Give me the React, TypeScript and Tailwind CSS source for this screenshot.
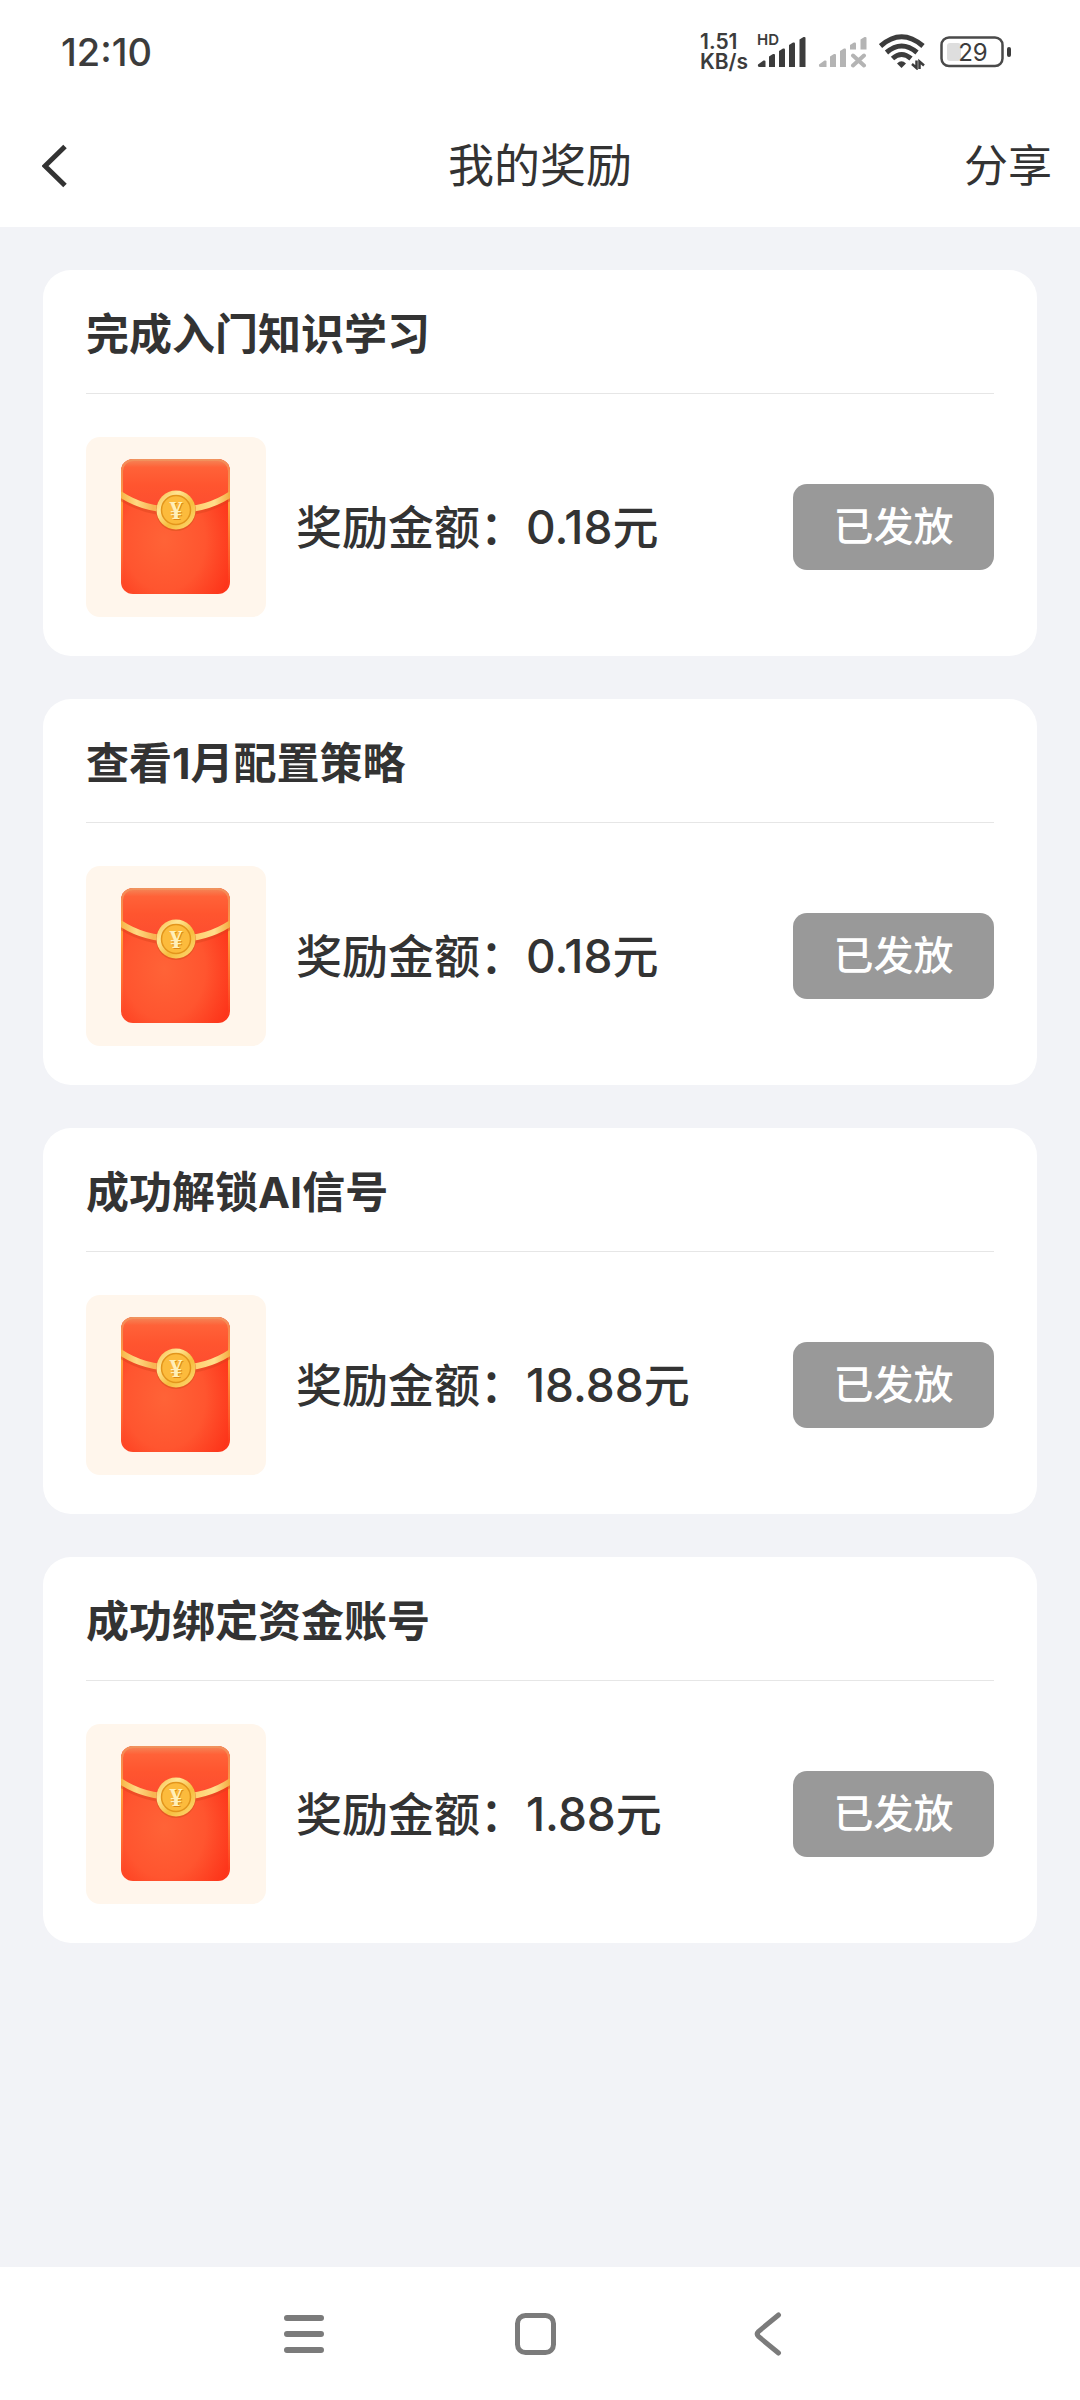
import { useId } from 'react'

type Reward = { id: number; title: string; amount: string }

const rewards: Reward[] = [
  { id: 1, title: '完成入门知识学习', amount: '0.18' },
  { id: 2, title: '查看1月配置策略', amount: '0.18' },
  { id: 3, title: '成功解锁AI信号', amount: '18.88' },
  { id: 4, title: '成功绑定资金账号', amount: '1.88' },
]

function SignalIcon() {
  return (
    <svg width="50" height="32" viewBox="0 0 50 32" fill="#3c3c3c" aria-hidden="true">
      <path d="M1 28.5 L6.5 24.5 Q8.500 24 8.500 25.500 V31 H2.500 Q.5 31 1 28.500Z" />
      <path d="M12 20.500 L16 18 Q18 17.500 18 19 V31 H12Z" />
      <path d="M22 15 L26 12.500 Q28 12 28 13.500 V31 H22Z" />
      <path d="M32 9 L36 6.500 Q38 6 38 7.500 V31 H32Z" />
      <path d="M42.500 3.500 L46.500 1 Q48.500 .5 48.500 2 V31 H42.500Z" />
    </svg>
  )
}

function NoSignalIcon() {
  return (
    <svg width="50" height="32" viewBox="0 0 50 32" fill="#b4b4b4" aria-hidden="true">
      <path d="M1 28.500 L6.500 24.500 Q8.500 24 8.500 25.500 V31 H2.500 Q.5 31 1 28.500Z" />
      <path d="M12 20.500 L16 18 Q18 17.500 18 19 V31 H12Z" />
      <path d="M22 15 L26 12.500 Q28 12 28 13.500 V31 H22Z" />
      <path d="M32 9 L36 6.500 Q38 6 38 7.500 V13.500 H32Z" />
      <path d="M42.500 3.500 L46.500 1 Q48.500 .5 48.500 2 V13.500 H42.500Z" />
      <path d="M35 19.500 L46 29.500 M46 19.500 L35 29.500" stroke="#b4b4b4" strokeWidth="4" strokeLinecap="round" />
    </svg>
  )
}

function WifiIcon() {
  return (
    <svg width="46" height="36" viewBox="0 0 46 36" fill="none" stroke="#3c3c3c" strokeWidth="5" aria-hidden="true">
      <path d="M1.500 12 Q22.500 -6.500 44 12" />
      <path d="M7.500 18.500 Q22.500 5.500 38 18.500" />
      <path d="M13.500 24.500 Q22.500 16.500 32 24.500" />
      <path d="M18 29.500 Q22.500 25 27 29.500 L22.500 34Z" fill="#3c3c3c" stroke="none" />
      <path d="M37.500 26.500 V34 L33 30 M40.500 35 V27.500 L45 31.500" strokeWidth="2.500" />
    </svg>
  )
}

function StatusBar() {
  return (
    <div className="flex h-[104px] items-center justify-between pl-[61px] pr-[68px] text-[#3c3c3c]">
      <span className="font-['Inter',sans-serif] text-[38px] font-medium">12:10</span>
      <div className="flex items-center">
        <p className="w-[57px] font-['Inter',sans-serif] text-[21px] font-semibold leading-5">1.51<br />KB/s</p>
        <div className="relative mr-[11px]">
          <span className="absolute -top-1 left-0 font-['Inter',sans-serif] text-[15px] font-semibold leading-4">HD</span>
          <SignalIcon />
        </div>
        <NoSignalIcon />
        <div className="ml-[11px] mr-[15px]"><WifiIcon /></div>
        <svg width="72" height="32" viewBox="0 0 72 32" aria-hidden="true">
          <rect x="1.500" y="1.500" width="61" height="28.500" rx="7.500" fill="none" stroke="#4a4a4a" strokeWidth="2.500" />
          <rect x="7" y="7" width="14" height="18" rx="3" fill="#dedede" />
          <rect x="67" y="11" width="4" height="10" rx="2" fill="#3c3c3c" />
          <text x="33" y="25" textAnchor="middle" fontSize="24" fontFamily="Inter, sans-serif" fill="#3c3c3c">29</text>
        </svg>
      </div>
    </div>
  )
}

function RedPacket() {
  const id = useId()
  return (
    <svg className="size-full" viewBox="0 0 180 180" aria-hidden="true">
      <defs>
        <radialGradient id={id + 'body'} cx="0.4" cy="0.6" r="0.75">
          <stop offset="0" stopColor="#ff6337" />
          <stop offset="0.5" stopColor="#ff552f" />
          <stop offset="1" stopColor="#fc2a13" />
        </radialGradient>
        <linearGradient id={id + 'flap'} x1="0" y1="0" x2="0" y2="1">
          <stop offset="0" stopColor="#f3895a" />
          <stop offset="0.16" stopColor="#ff6238" />
          <stop offset="0.5" stopColor="#ff552f" />
          <stop offset="1" stopColor="#fd4c30" />
        </linearGradient>
        <linearGradient id={id + 'edge'} x1="0" y1="0" x2="0" y2="1">
          <stop offset="0" stopColor="#ee9a62" stopOpacity="0.6" />
          <stop offset="0.35" stopColor="#ffa23f" />
          <stop offset="0.75" stopColor="#ff7a35" stopOpacity="0.5" />
          <stop offset="1" stopColor="#ff5a30" stopOpacity="0" />
        </linearGradient>
        <linearGradient id={id + 'band'} x1="0" y1="0" x2="1" y2="0">
          <stop offset="0" stopColor="#f6b343" />
          <stop offset="0.15" stopColor="#ffd982" />
          <stop offset="0.3" stopColor="#f8b452" />
          <stop offset="0.7" stopColor="#ffd273" />
          <stop offset="0.85" stopColor="#ffdf8b" />
          <stop offset="1" stopColor="#f3a83c" />
        </linearGradient>
        <linearGradient id={id + 'coin'} x1="0" y1="0" x2="1" y2="1">
          <stop offset="0" stopColor="#f8b83c" />
          <stop offset="0.3" stopColor="#ffe594" />
          <stop offset="0.6" stopColor="#f6bd3d" />
          <stop offset="1" stopColor="#ffdc78" />
        </linearGradient>
        <clipPath id={id + 'clip'}>
          <rect x="35" y="22" width="109" height="135" rx="12" />
        </clipPath>
      </defs>
      <g clipPath={`url(#${id}clip)`}>
        <rect x="35" y="22" width="109" height="135" fill={`url(#${id}body)`} />
        <path d="M35 22 H144 V57 Q121 74 90 74 Q58 74 35 57Z" fill={`url(#${id}flap)`} />
        <rect x="35" y="22" width="109" height="135" rx="12" fill="none" stroke={`url(#${id}edge)`} strokeWidth="4" />
        <path d="M34 60 Q58 76 90 76 Q121 76 145 60" fill="none" stroke="#d9431c" strokeOpacity="0.45" strokeWidth="6" />
        <path d="M34 57 Q58 73 90 73 Q121 73 145 57" fill="none" stroke={`url(#${id}band)`} strokeWidth="6" />
      </g>
      <circle cx="90" cy="74" r="20" fill="#d9531c" fillOpacity="0.6" />
      <circle cx="90" cy="73" r="19.500" fill={`url(#${id}coin)`} />
      <circle cx="90" cy="73" r="14.500" fill="#fcbb3c" stroke="#e3951c" strokeWidth="1.500" />
      <text x="91" y="83" textAnchor="middle" fontSize="26" fontWeight="700" fontFamily="Liberation Serif, serif" fill="#dc8a17">¥</text>
      <text x="90" y="82" textAnchor="middle" fontSize="26" fontWeight="700" fontFamily="Liberation Serif, serif" fill="#fff0b8">¥</text>
    </svg>
  )
}

function RewardCard({ title, amount }: Reward) {
  return (
    <section className="h-[386px] rounded-[28px] bg-white px-[43px]">
      <h2 className="flex h-[124px] items-center border-b border-[#e6e6e6] pt-1 font-['Inter','Noto_Sans_CJK_SC',sans-serif] text-[43px] font-bold leading-[60px]">{title}</h2>
      <div className="flex items-center pt-[43px]">
        <div className="size-[180px] shrink-0 overflow-hidden rounded-[14px] bg-[#fff6ec]">
          <RedPacket />
        </div>
        <p className="ml-[30px] flex-1 pb-1 text-[46px] font-medium leading-[60px]">
          奖励金额：<span className="font-['Inter','Noto_Sans_CJK_SC',sans-serif]">{amount}</span>元
        </p>
        <button className="h-[86px] w-[201px] shrink-0 rounded-[14px] bg-[#999] pb-1.5 text-[40px] font-medium text-white">已发放</button>
      </div>
    </section>
  )
}

export default function App() {
  return (
    <div className="flex min-h-screen flex-col bg-[#f2f3f7] font-['Noto_Sans_CJK_SC',sans-serif] text-[#333]">
      <header className="bg-white">
        <StatusBar />
        <div className="grid h-[123px] grid-cols-[1fr_auto_1fr] items-center px-7">
          <button className="justify-self-start pl-3.5" aria-label="返回">
            <svg width="25" height="44" viewBox="0 0 25 44" fill="none" stroke="#333" strokeWidth="5">
              <path d="M23 2.500 L3 22 L23 41.500" />
            </svg>
          </button>
          <h1 className="pb-1.5 text-center text-[46px]">我的奖励</h1>
          <button className="justify-self-end pb-1.5 text-[44px]">分享</button>
        </div>
      </header>

      <main className="flex flex-1 flex-col gap-[43px] p-[43px]">
        {rewards.map(r => <RewardCard key={r.id} {...r} />)}
      </main>

      <nav className="grid h-[133px] grid-cols-3 place-items-center bg-white pl-[188px] pr-[196px]">
        <button aria-label="菜单">
          <svg width="44" height="44" viewBox="0 0 44 44" stroke="#7b7b7b" strokeWidth="6" strokeLinecap="round">
            <path d="M5 6 H39 M5 22 H39 M5 38 H39" />
          </svg>
        </button>
        <button aria-label="主页">
          <svg width="44" height="44" viewBox="0 0 44 44" fill="none" stroke="#7b7b7b" strokeWidth="5">
            <rect x="3.500" y="3.500" width="36" height="37" rx="8" />
          </svg>
        </button>
        <button aria-label="后退">
          <svg width="44" height="44" viewBox="0 0 44 44" fill="none" stroke="#7b7b7b" strokeWidth="5" strokeLinecap="round">
            <path d="M32.500 3 L12.500 19.500 Q10 22 12.500 24.500 L32.500 41" />
          </svg>
        </button>
      </nav>
    </div>
  )
}
